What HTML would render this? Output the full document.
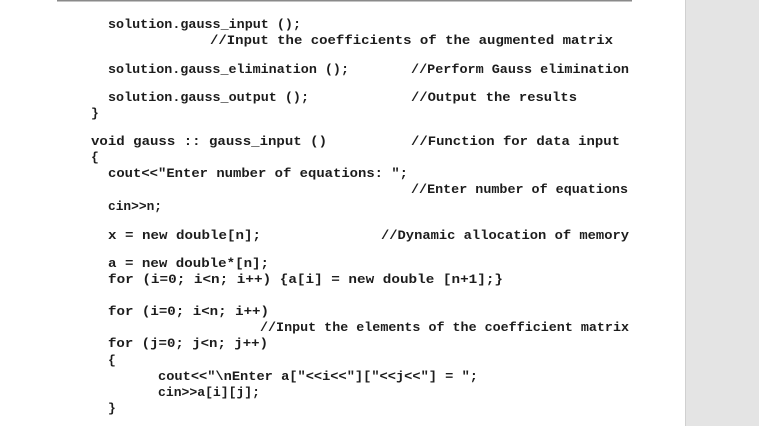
<!DOCTYPE html>
<html><head><meta charset="utf-8"><style>
html,body{margin:0;padding:0;background:#fff;width:759px;height:426px;overflow:hidden}
svg{display:block}
text{font-family:"Liberation Mono",monospace;font-size:13px;font-weight:bold;fill:#1c1c1c;white-space:pre}
</style></head><body>
<svg width="759" height="426" viewBox="0 0 759 426" xmlns="http://www.w3.org/2000/svg">
<rect x="0" y="0" width="759" height="426" fill="#fff"/>
<rect x="685" y="0" width="74" height="426" fill="#e4e4e4"/>
<rect x="685" y="0" width="1" height="426" fill="#d0d0d0"/>
<rect x="57" y="0" width="575" height="1.5" fill="#8a8a8a"/>
<text x="108" y="28" textLength="193" lengthAdjust="spacingAndGlyphs">solution.gauss_input ();</text>
<text x="210" y="44" textLength="403" lengthAdjust="spacingAndGlyphs">//Input the coefficients of the augmented matrix</text>
<text x="108" y="73" textLength="241" lengthAdjust="spacingAndGlyphs">solution.gauss_elimination ();</text>
<text x="411" y="73" textLength="218" lengthAdjust="spacingAndGlyphs">//Perform Gauss elimination</text>
<text x="108" y="101" textLength="201" lengthAdjust="spacingAndGlyphs">solution.gauss_output ();</text>
<text x="411" y="101" textLength="166" lengthAdjust="spacingAndGlyphs">//Output the results</text>
<text x="91" y="117">}</text>
<text x="91" y="145" textLength="236" lengthAdjust="spacingAndGlyphs">void gauss :: gauss_input ()</text>
<text x="411" y="145" textLength="209" lengthAdjust="spacingAndGlyphs">//Function for data input</text>
<text x="91" y="161">{</text>
<text x="108" y="177" textLength="300" lengthAdjust="spacingAndGlyphs">cout&lt;&lt;"Enter number of equations: ";</text>
<text x="411" y="193" textLength="217" lengthAdjust="spacingAndGlyphs">//Enter number of equations</text>
<text x="108" y="210" textLength="54" lengthAdjust="spacingAndGlyphs">cin&gt;&gt;n;</text>
<text x="108" y="239" textLength="153" lengthAdjust="spacingAndGlyphs">x = new double[n];</text>
<text x="381" y="239" textLength="248" lengthAdjust="spacingAndGlyphs">//Dynamic allocation of memory</text>
<text x="108" y="267" textLength="161" lengthAdjust="spacingAndGlyphs">a = new double*[n];</text>
<text x="108" y="283" textLength="395" lengthAdjust="spacingAndGlyphs">for (i=0; i&lt;n; i++) {a[i] = new double [n+1];}</text>
<text x="108" y="315" textLength="161" lengthAdjust="spacingAndGlyphs">for (i=0; i&lt;n; i++)</text>
<text x="260" y="331" textLength="369" lengthAdjust="spacingAndGlyphs">//Input the elements of the coefficient matrix</text>
<text x="108" y="347" textLength="160" lengthAdjust="spacingAndGlyphs">for (j=0; j&lt;n; j++)</text>
<text x="108" y="364">{</text>
<text x="158" y="380" textLength="320" lengthAdjust="spacingAndGlyphs">cout&lt;&lt;"\nEnter a["&lt;&lt;i&lt;&lt;"]["&lt;&lt;j&lt;&lt;"] = ";</text>
<text x="158" y="396" textLength="102" lengthAdjust="spacingAndGlyphs">cin&gt;&gt;a[i][j];</text>
<text x="108" y="412">}</text>
</svg>
</body></html>
